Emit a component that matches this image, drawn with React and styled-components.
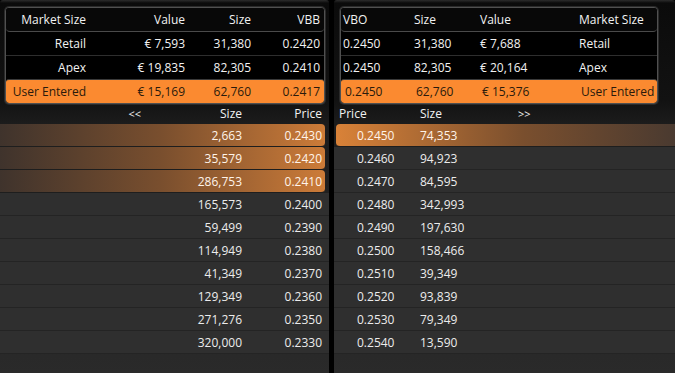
import styled, { createGlobalStyle, css } from "styled-components";

const GlobalStyle = createGlobalStyle`
  html, body {
    margin: 0;
    padding: 0;
    background: #000;
  }
  body {
    font-family: "Open Sans", "Noto Sans", sans-serif;
    font-size: 12px;
    color: #f2f2f2;
  }
`;

const bids = [
  { size: "2,663", price: "0.2430", hit: true },
  { size: "35,579", price: "0.2420", hit: true },
  { size: "286,753", price: "0.2410", hit: true },
  { size: "165,573", price: "0.2400" },
  { size: "59,499", price: "0.2390" },
  { size: "114,949", price: "0.2380" },
  { size: "41,349", price: "0.2370" },
  { size: "129,349", price: "0.2360" },
  { size: "271,276", price: "0.2350" },
  { size: "320,000", price: "0.2330" },
];

const offers = [
  { price: "0.2450", size: "74,353", hit: true },
  { price: "0.2460", size: "94,923" },
  { price: "0.2470", size: "84,595" },
  { price: "0.2480", size: "342,993" },
  { price: "0.2490", size: "197,630" },
  { price: "0.2500", size: "158,466" },
  { price: "0.2510", size: "39,349" },
  { price: "0.2520", size: "93,839" },
  { price: "0.2530", size: "79,349" },
  { price: "0.2540", size: "13,590" },
];

const buySummary = [
  { name: "Retail", value: "€ 7,593", size: "31,380", px: "0.2420" },
  { name: "Apex", value: "€ 19,835", size: "82,305", px: "0.2410" },
  { name: "User Entered", value: "€ 15,169", size: "62,760", px: "0.2417", user: true },
];

const sellSummary = [
  { px: "0.2450", size: "31,380", value: "€ 7,688", name: "Retail" },
  { px: "0.2450", size: "82,305", value: "€ 20,164", name: "Apex" },
  { px: "0.2450", size: "62,760", value: "€ 15,376", name: "User Entered", user: true },
];

export default function App() {
  return (
    <>
      <GlobalStyle />
      <Board>
        <Panel $side="buy">
          <Summary $side="buy">
            <SummaryHead $side="buy">
              <span>Market Size</span>
              <span>Value</span>
              <span>Size</span>
              <span>VBB</span>
            </SummaryHead>
            {buySummary.map((r) => (
              <SummaryRow key={r.name} $side="buy" $user={r.user}>
                <span>{r.name}</span>
                <span>{r.value}</span>
                <span>{r.size}</span>
                <span>{r.px}</span>
              </SummaryRow>
            ))}
          </Summary>
          <LadderHead $side="buy">
            <Arrow $side="buy">&lt;&lt;</Arrow>
            <span>Size</span>
            <span>Price</span>
          </LadderHead>
          <Ladder>
            {bids.map((b) => (
              <LadderRow key={b.price} $side="buy" $hit={b.hit}>
                <span />
                <span>{b.size}</span>
                <span>{b.price}</span>
              </LadderRow>
            ))}
          </Ladder>
        </Panel>
        <Panel $side="sell">
          <Summary $side="sell">
            <SummaryHead $side="sell">
              <span>VBO</span>
              <span>Size</span>
              <span>Value</span>
              <span>Market Size</span>
            </SummaryHead>
            {sellSummary.map((r) => (
              <SummaryRow key={r.name} $side="sell" $user={r.user}>
                <span>{r.px}</span>
                <span>{r.size}</span>
                <span>{r.value}</span>
                <span>{r.name}</span>
              </SummaryRow>
            ))}
          </Summary>
          <LadderHead $side="sell">
            <span>Price</span>
            <span>Size</span>
            <Arrow $side="sell">&gt;&gt;</Arrow>
          </LadderHead>
          <Ladder>
            {offers.map((o) => (
              <LadderRow key={o.price} $side="sell" $hit={o.hit}>
                <span>{o.price}</span>
                <span>{o.size}</span>
                <span />
              </LadderRow>
            ))}
          </Ladder>
        </Panel>
      </Board>
    </>
  );
}

const Board = styled.div`
  display: flex;
  gap: 5px;
  width: 675px;
  height: 373px;
  background: #000;
  overflow: hidden;
`;

const Panel = styled.div`
  display: flex;
  flex-direction: column;
  width: ${(p) => (p.$side === "buy" ? "329px" : "341px")};
  height: 100%;
  background: linear-gradient(
    to bottom,
    #2c2c2c 0px,
    #0b0b0b 3px,
    #121212 100px,
    #1c1c1c 124px,
    #2a2a2a 373px
  );
  border-radius: 3px 3px 0 0;
`;

const Summary = styled.div`
  margin: ${(p) => (p.$side === "buy" ? "7px 4px 0 5px" : "7px 17px 0 6px")};
  border: 1px solid #505050;
  box-shadow: 0 0 0 1px #2a2a2a;
  border-radius: 4px;
  background: #000;
  overflow: hidden;
`;

const buyCols = "80px 99px 66px 1fr";
const sellCols = "71px 66px 99px 1fr";

const summaryGrid = css`
  display: grid;
  grid-template-columns: ${(p) => (p.$side === "buy" ? buyCols : sellCols)};
  align-items: center;
  height: 23px;
  padding: ${(p) => (p.$side === "buy" ? "0 4px 0 0" : "0 0 0 2px")};
  span {
    white-space: nowrap;
    text-align: ${(p) => (p.$side === "buy" ? "right" : "left")};
  }
`;

const SummaryHead = styled.div`
  ${summaryGrid}
  background: #080808;
  border-bottom: 1px solid #4a4a4a;
  border-radius: 0 0 4px 4px;
`;

const SummaryRow = styled.div`
  ${summaryGrid}
  border-top: 1px solid #2e2e2e;
  &:nth-child(2) {
    border-top: none;
  }
  ${(p) =>
    p.$user &&
    css`
      background: #fb8a30;
      color: #2a1a0c;
      border-radius: 3px;
      border-top: 1px solid #3a3a3a;
      padding: ${p.$side === "buy" ? "0 4px 0 0" : "0 0 0 4px"};
    `}
`;

const ladderCols = css`
  display: grid;
  grid-template-columns: ${(p) =>
    p.$side === "buy" ? "1fr 80px 80px" : "63px 100px 1fr"};
`;

const LadderHead = styled.div`
  ${ladderCols}
  align-items: center;
  height: 19px;
  padding: ${(p) => (p.$side === "buy" ? "0 7px 0 0" : "0 0 0 5px")};
  grid-template-columns: ${(p) =>
    p.$side === "buy" ? "1fr 80px 80px" : "81px 100px 1fr"};
  span {
    text-align: ${(p) => (p.$side === "buy" ? "right" : "left")};
  }
`;

const Arrow = styled.span`
  font-size: 11px;
  ${LadderHead} && {
    text-align: ${(p) => (p.$side === "buy" ? "right" : "left")};
    padding-right: ${(p) => (p.$side === "buy" ? "21px" : "0")};
    margin-left: ${(p) => (p.$side === "buy" ? "0" : "-2px")};
  }
`;

const Ladder = styled.div`
  display: flex;
  flex-direction: column;
  margin-top: 1px;
`;

const LadderRow = styled.div`
  ${ladderCols}
  align-items: center;
  height: 22px;
  border-bottom: 1px solid #242424;
  background: #2f2f2f;
  color: #ececec;
  padding: ${(p) => (p.$side === "buy" ? "0 7px 0 0" : "0 0 0 23px")};
  span {
    text-align: ${(p) => (p.$side === "buy" ? "right" : "left")};
  }
  ${(p) =>
    p.$hit &&
    (p.$side === "buy"
      ? css`
          background: linear-gradient(to right, #3f332c 0%, #7a4f2e 50%, #cc7b38 100%);
          border-bottom-color: #1e1e1e;
          border-radius: 0 4px 4px 0;
          margin-right: 4px;
          padding-right: 3px;
          color: #fff4ea;
        `
      : css`
          background: linear-gradient(to right, #d98238 0%, #7a4f2e 55%, #4a3a30 100%);
          border-bottom-color: #1e1e1e;
          border-radius: 4px 0 0 4px;
          margin-left: 2px;
          padding-left: 21px;
          color: #fff4ea;
        `)}
`;
